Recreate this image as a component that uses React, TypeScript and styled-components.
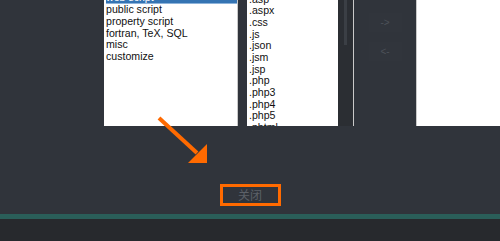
import React from "react";
import styled, { createGlobalStyle } from "styled-components";

const GlobalStyle = createGlobalStyle`
  html, body {
    margin: 0;
    padding: 0;
    background: #30343b;
  }
  body {
    font-family: "Liberation Sans", "Noto Sans CJK SC", sans-serif;
  }
`;

const categories = [
  "web script",
  "public script",
  "property script",
  "fortran, TeX, SQL",
  "misc",
  "customize",
];

const extensions = [
  ".asp",
  ".aspx",
  ".css",
  ".js",
  ".json",
  ".jsm",
  ".jsp",
  ".php",
  ".php3",
  ".php4",
  ".php5",
  ".phtml",
];

const Page = styled.div`
  position: relative;
  width: 500px;
  height: 241px;
  display: flex;
  flex-direction: column;
  overflow: hidden;
`;

const Panel = styled.div`
  height: 214px;
  display: flex;
  flex-direction: column;
  background: #30343b;
`;

const ListsRow = styled.div`
  height: 126px;
  display: flex;
  padding-left: 104px;
`;

const ListBox = styled.div<{ $width: number; $ml?: number }>`
  width: ${(p) => p.$width}px;
  margin-left: ${(p) => p.$ml || 0}px;
  height: 126px;
  background: #fff;
  display: flex;
  overflow: hidden;
  box-sizing: border-box;
  border-right: 1px solid #c9c9c9;
`;

const Items = styled.div<{ $offset: number }>`
  flex: 1;
  margin-top: ${(p) => p.$offset}px;
  padding-left: 2px;
`;

const Item = styled.div<{ $selected?: boolean }>`
  height: 11.7px;
  line-height: 11.7px;
  font-size: 10.6px;
  color: ${(p) => (p.$selected ? "#fff" : "#111")};
  background: ${(p) => (p.$selected ? "#3574b3" : "transparent")};
  border-bottom: ${(p) => (p.$selected ? "1px solid #8db3da" : "none")};
  box-sizing: border-box;
  white-space: nowrap;
`;

const ScrollTrack = styled.div`
  width: 15px;
  background: #2b2e33;
  display: flex;
  justify-content: center;
`;

const Thumb = styled.div`
  width: 3px;
  height: 45px;
  background: #3b3f45;
`;

const Mover = styled.div`
  width: 62px;
  display: flex;
  flex-direction: column;
  align-items: center;
  gap: 10px;
  padding-top: 13px;
`;

const MoveButton = styled.div`
  width: 33px;
  height: 19px;
  background: #31353c;
  color: #4c5158;
  font-size: 10px;
  display: flex;
  align-items: center;
  justify-content: center;
`;

const RightBox = styled.div`
  flex: 1;
  height: 126px;
  background: #fff;
  border-left: 1px solid #c9c9c9;
  box-sizing: border-box;
`;

const Footer = styled.div`
  flex: 1;
  display: flex;
  justify-content: center;
  padding-top: 58px;
`;

const CloseButton = styled.div`
  width: 61px;
  height: 22px;
  box-sizing: border-box;
  border: 3px solid #ff6a00;
  color: #5c6168;
  font-family: "Noto Sans CJK SC", sans-serif;
  font-size: 12px;
  line-height: 16px;
  text-align: center;
`;

const TealBar = styled.div`
  height: 5px;
  background: #2a5e59;
`;

const Bottom = styled.div`
  flex: 1;
  background: #27292d;
`;

const Arrow = styled.svg`
  position: absolute;
  left: 0;
  top: 0;
  pointer-events: none;
`;

export default function App() {
  return (
    <Page>
      <GlobalStyle />
      <Panel>
        <ListsRow>
          <ListBox $width={134}>
            <Items $offset={-7.55}>
              {categories.map((c, i) => (
                <Item key={c} $selected={i === 0}>
                  {c}
                </Item>
              ))}
            </Items>
          </ListBox>
          <ListBox $width={107} $ml={9}>
            <Items $offset={-6.5}>
              {extensions.map((e) => (
                <Item key={e}>{e}</Item>
              ))}
            </Items>
            <ScrollTrack>
              <Thumb />
            </ScrollTrack>
          </ListBox>
          <Mover>
            <MoveButton>-&gt;</MoveButton>
            <MoveButton>&lt;-</MoveButton>
          </Mover>
          <RightBox />
        </ListsRow>
        <Footer>
          <CloseButton>关闭</CloseButton>
        </Footer>
      </Panel>
      <TealBar />
      <Bottom />
      <Arrow width="500" height="241" viewBox="0 0 500 241">
        <line
          x1="159"
          y1="118"
          x2="197"
          y2="153"
          stroke="#ff6a00"
          strokeWidth="4"
        />
        <polygon points="207,163 188,163 207,144" fill="#ff6a00" />
      </Arrow>
    </Page>
  );
}
